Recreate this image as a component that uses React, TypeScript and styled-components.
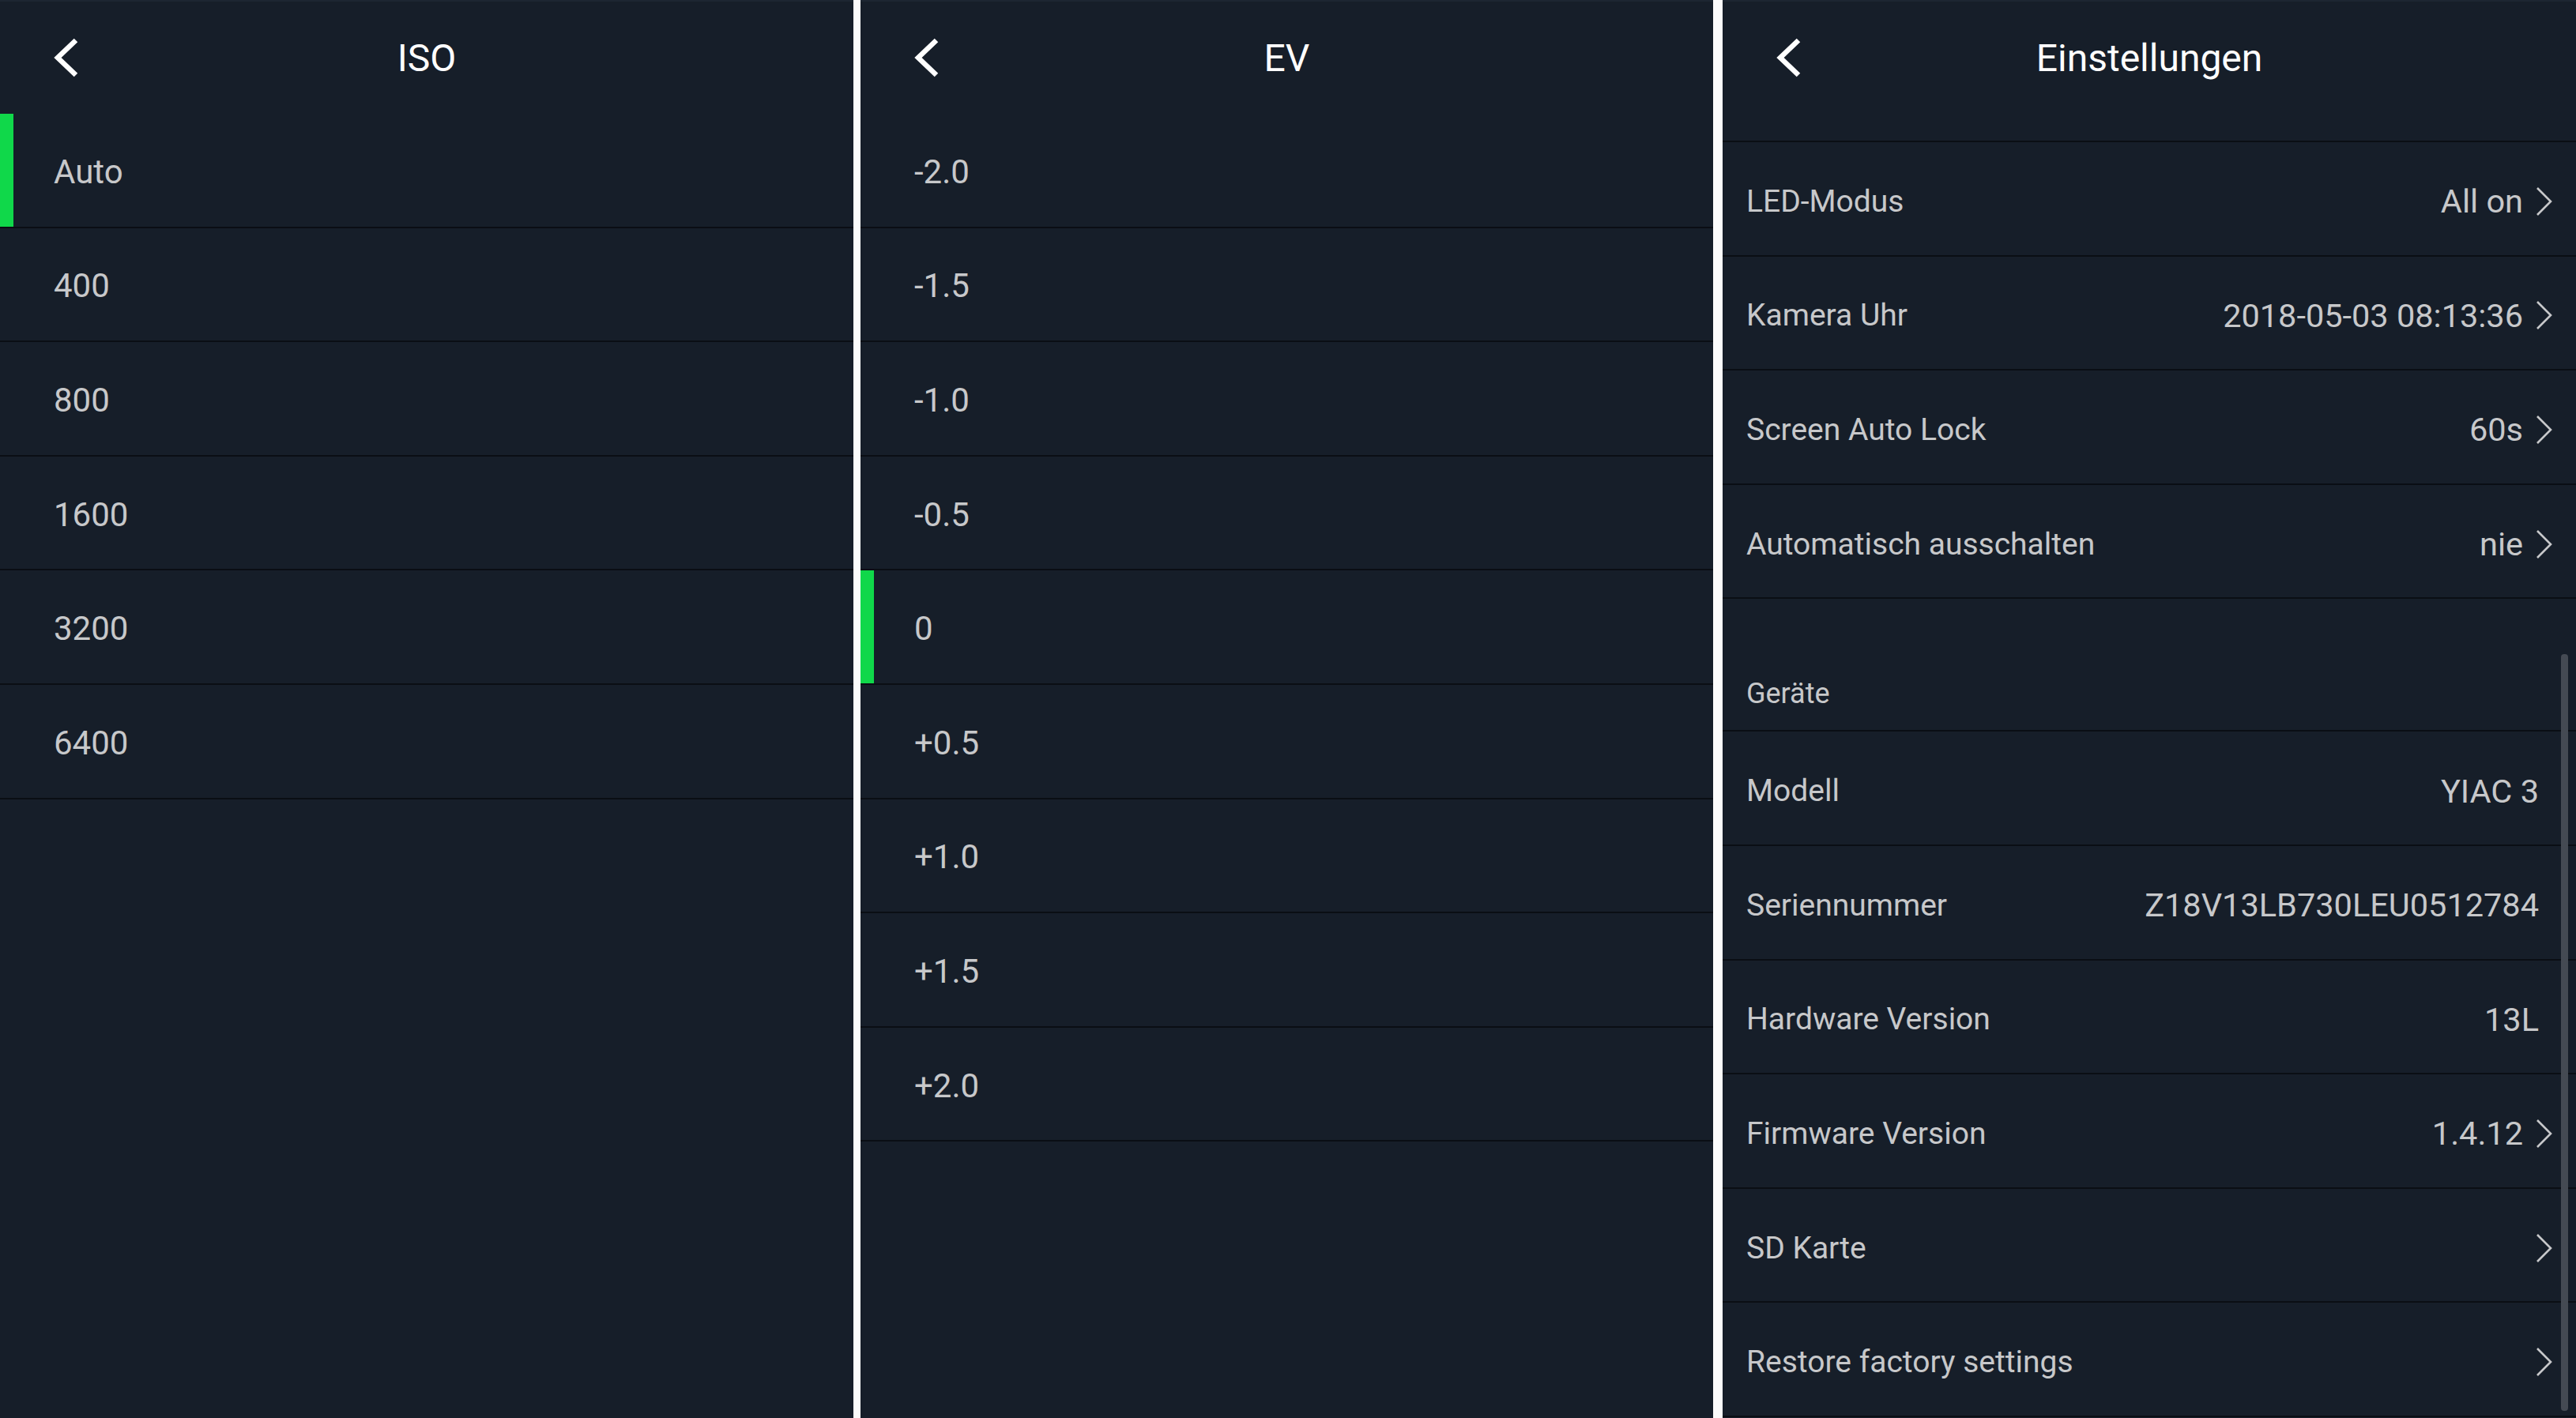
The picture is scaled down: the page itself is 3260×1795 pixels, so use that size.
import React from 'react'
import styled, { createGlobalStyle } from 'styled-components'

const GlobalStyle = createGlobalStyle`
  html, body {
    margin: 0;
    padding: 0;
    background: #ffffff;
  }
  body {
    font-family: Roboto, "Noto Sans", "Liberation Sans", sans-serif;
  }
`

const BG = '#161e29'
const LINE = '#0a0e14'
const TEXT = '#c7c8ca'
const GREEN = '#10d84a'

const Screen = styled.div`
  display: flex;
  width: 3260px;
  height: 1795px;
  overflow: hidden;
  background: #ffffff;
`

const Panel = styled.section<{ $w: number }>`
  position: relative;
  display: flex;
  flex-direction: column;
  width: ${p => p.$w}px;
  flex: none;
  height: 100%;
  background: ${BG};
  border-top: 2px solid #1d2632;
  box-sizing: border-box;
`

const Divider = styled.div<{ $w: number }>`
  width: ${p => p.$w}px;
  flex: none;
  background: #fbfbfb;
`

const Header = styled.header`
  display: grid;
  grid-template-columns: 1fr auto 1fr;
  align-items: center;
  height: 142px;
  flex: none;
`

const BackButton = styled.button`
  justify-self: start;
  display: flex;
  align-items: center;
  padding: 0 0 0 68px;
  margin: 0;
  border: 0;
  background: none;
  cursor: pointer;
`

const Title = styled.h1`
  margin: 0;
  font-size: 48px;
  font-weight: 400;
  color: #ffffff;
  letter-spacing: 0;
`

const OptionRow = styled.div<{ $selected?: boolean }>`
  display: flex;
  align-items: center;
  height: 144.6px;
  flex: none;
  box-sizing: border-box;
  padding: 4px 0 0 68px;
  border-bottom: 2px solid ${LINE};
  font-size: 42px;
  color: ${TEXT};
  box-shadow: ${p => (p.$selected ? `inset 17px 0 0 ${GREEN}` : 'none')};
`

const ScrollStub = styled.div`
  height: 36px;
  flex: none;
  box-sizing: border-box;
  border-bottom: 2px solid ${LINE};
`

const SettingRow = styled.div`
  display: flex;
  align-items: center;
  justify-content: space-between;
  height: 144.6px;
  flex: none;
  box-sizing: border-box;
  padding: 7px 30px 0 30px;
  border-bottom: 2px solid ${LINE};
  color: ${TEXT};
`

const Label = styled.span`
  font-size: 39px;
`

const Value = styled.span<{ $arrow?: boolean }>`
  display: flex;
  align-items: center;
  font-size: 41.5px;
  margin-right: ${p => (p.$arrow ? 0 : 17)}px;
`

const SectionHeader = styled.div`
  display: flex;
  align-items: flex-end;
  height: 168px;
  flex: none;
  box-sizing: border-box;
  padding: 0 0 24px 30px;
  border-bottom: 2px solid ${LINE};
  font-size: 36px;
  line-height: 1.2;
  color: ${TEXT};
`

const Scrollbar = styled.div`
  position: absolute;
  top: 826px;
  right: 10px;
  width: 9px;
  height: 958px;
  border-radius: 4px;
  background: #444a53;
`

const BackIcon = () => (
  <svg width="32" height="50" viewBox="0 0 32 50" fill="none">
    <polyline points="28,3 5,25 28,47" stroke="#ffffff" strokeWidth="6.5" strokeLinejoin="miter" strokeLinecap="butt" />
  </svg>
)

const NextIcon = styled.svg`
  margin-left: 16px;
  flex: none;
`

const Chevron = () => (
  <NextIcon width="21" height="38" viewBox="0 0 21 38" fill="none">
    <polyline points="2,2 19,19 2,36" stroke={TEXT} strokeWidth="2.6" strokeLinejoin="miter" />
  </NextIcon>
)

const isoOptions = ['Auto', '400', '800', '1600', '3200', '6400']
const evOptions = ['-2.0', '-1.5', '-1.0', '-0.5', '0', '+0.5', '+1.0', '+1.5', '+2.0']

type Setting = { label: string; value?: string; arrow?: boolean }

const general: Setting[] = [
  { label: 'LED-Modus', value: 'All on', arrow: true },
  { label: 'Kamera Uhr', value: '2018-05-03 08:13:36', arrow: true },
  { label: 'Screen Auto Lock', value: '60s', arrow: true },
  { label: 'Automatisch ausschalten', value: 'nie', arrow: true },
]

const device: Setting[] = [
  { label: 'Modell', value: 'YIAC 3' },
  { label: 'Seriennummer', value: 'Z18V13LB730LEU0512784' },
  { label: 'Hardware Version', value: '13L' },
  { label: 'Firmware Version', value: '1.4.12', arrow: true },
  { label: 'SD Karte', arrow: true },
  { label: 'Restore factory settings', arrow: true },
]

const OptionPanel = ({ title, options, selected, width }: { title: string; options: string[]; selected: string; width: number }) => (
  <Panel $w={width}>
    <Header>
      <BackButton aria-label="Zurück"><BackIcon /></BackButton>
      <Title>{title}</Title>
      <span />
    </Header>
    {options.map(o => (
      <OptionRow key={o} $selected={o === selected}>{o}</OptionRow>
    ))}
  </Panel>
)

const SettingItem = ({ label, value, arrow }: Setting) => (
  <SettingRow>
    <Label>{label}</Label>
    <Value $arrow={arrow}>
      {value}
      {arrow && <Chevron />}
    </Value>
  </SettingRow>
)

export default function App() {
  return (
    <>
      <GlobalStyle />
      <Screen>
        <OptionPanel title="ISO" options={isoOptions} selected="Auto" width={1080} />
        <Divider $w={9} />
        <OptionPanel title="EV" options={evOptions} selected="0" width={1079} />
        <Divider $w={12} />
        <Panel $w={1080}>
          <Header>
            <BackButton aria-label="Zurück"><BackIcon /></BackButton>
            <Title>Einstellungen</Title>
            <span />
          </Header>
          <ScrollStub />
          {general.map(s => <SettingItem key={s.label} {...s} />)}
          <SectionHeader>Geräte</SectionHeader>
          {device.map(s => <SettingItem key={s.label} {...s} />)}
          <Scrollbar />
        </Panel>
      </Screen>
    </>
  )
}
